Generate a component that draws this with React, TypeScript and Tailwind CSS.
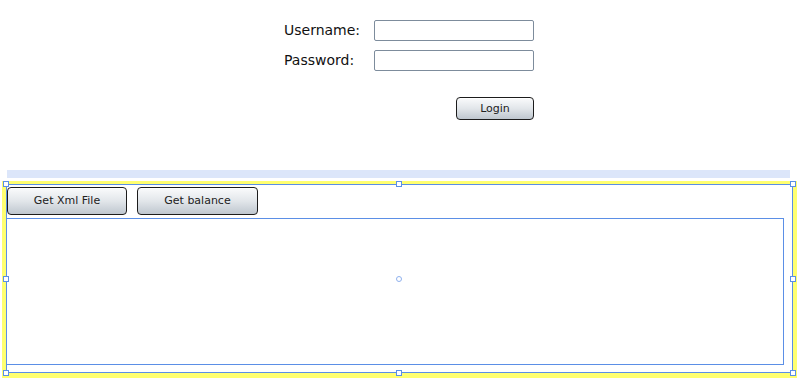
import React from "react";

const font = { fontFamily: '"DejaVu Sans", "Liberation Sans", sans-serif' };

function Btn({ label, className }: { label: string; className: string }) {
  return (
    <button
      className={`flex items-center justify-center rounded-[4px] border border-[#1c1c1c] bg-gradient-to-b from-[#fafbfc] via-[#e2e6ea] to-[#bfc7cf] pt-[1px] text-[11px] text-[#222] shadow-[inset_0_1px_0_#ffffff] ${className}`}
    >
      {label}
    </button>
  );
}

function Handle({ className }: { className: string }) {
  return <div className={`absolute h-[6px] w-[6px] border border-[#5b8fe6] bg-white ${className}`} />;
}

export default function App() {
  return (
    <div className="h-[386px] w-[797px] overflow-hidden bg-white" style={font}>
      <div className="pl-[284px] pt-[20px]">
        <div className="flex flex-col gap-[9px]">
          <div className="flex h-[21px] items-center">
            <span className="w-[90px] text-[14px] text-[#111]">Username:</span>
            <div className="h-[21px] w-[160px] rounded-[2px] border border-[#7d8c9c] bg-white" />
          </div>
          <div className="flex h-[21px] items-center">
            <span className="w-[90px] text-[14px] text-[#111]">Password:</span>
            <div className="h-[21px] w-[160px] rounded-[2px] border border-[#7d8c9c] bg-white" />
          </div>
        </div>
        <Btn label="Login" className="ml-[172px] mt-[26px] h-[23px] w-[78px]" />
      </div>

      <div className="ml-[7px] mt-[50px] h-[8px] w-[783px] bg-[#dce6fa]" />

      <div className="ml-[2px] mt-[3px] h-[197px] w-[795px] bg-[#ffff70] pb-[5px] pl-[4px] pr-[4px] pt-[3px]">
        <div className="relative flex h-full flex-col border border-[#5b8fe6] bg-white">
          <div className="mt-[2px] flex gap-[10px]">
            <Btn label="Get Xml File" className="h-[28px] w-[120px]" />
            <Btn label="Get balance" className="h-[28px] w-[121px]" />
          </div>
          <div className="-ml-[1px] mt-[3px] h-[147px] w-[778px] border border-[#5b8fe6] bg-white" />

          <Handle className="-left-[4px] -top-[4px]" />
          <Handle className="-right-[4px] -top-[4px]" />
          <Handle className="-bottom-[4px] -left-[4px]" />
          <Handle className="-bottom-[4px] -right-[4px]" />
          <Handle className="-top-[4px] left-[389px]" />
          <Handle className="-bottom-[4px] left-[389px]" />
          <Handle className="-left-[4px] top-[91px]" />
          <Handle className="-right-[4px] top-[91px]" />
          <div className="absolute left-[389px] top-[91px] h-[6px] w-[6px] rounded-full border border-[#8fb1ee] bg-white" />
        </div>
      </div>
    </div>
  );
}
